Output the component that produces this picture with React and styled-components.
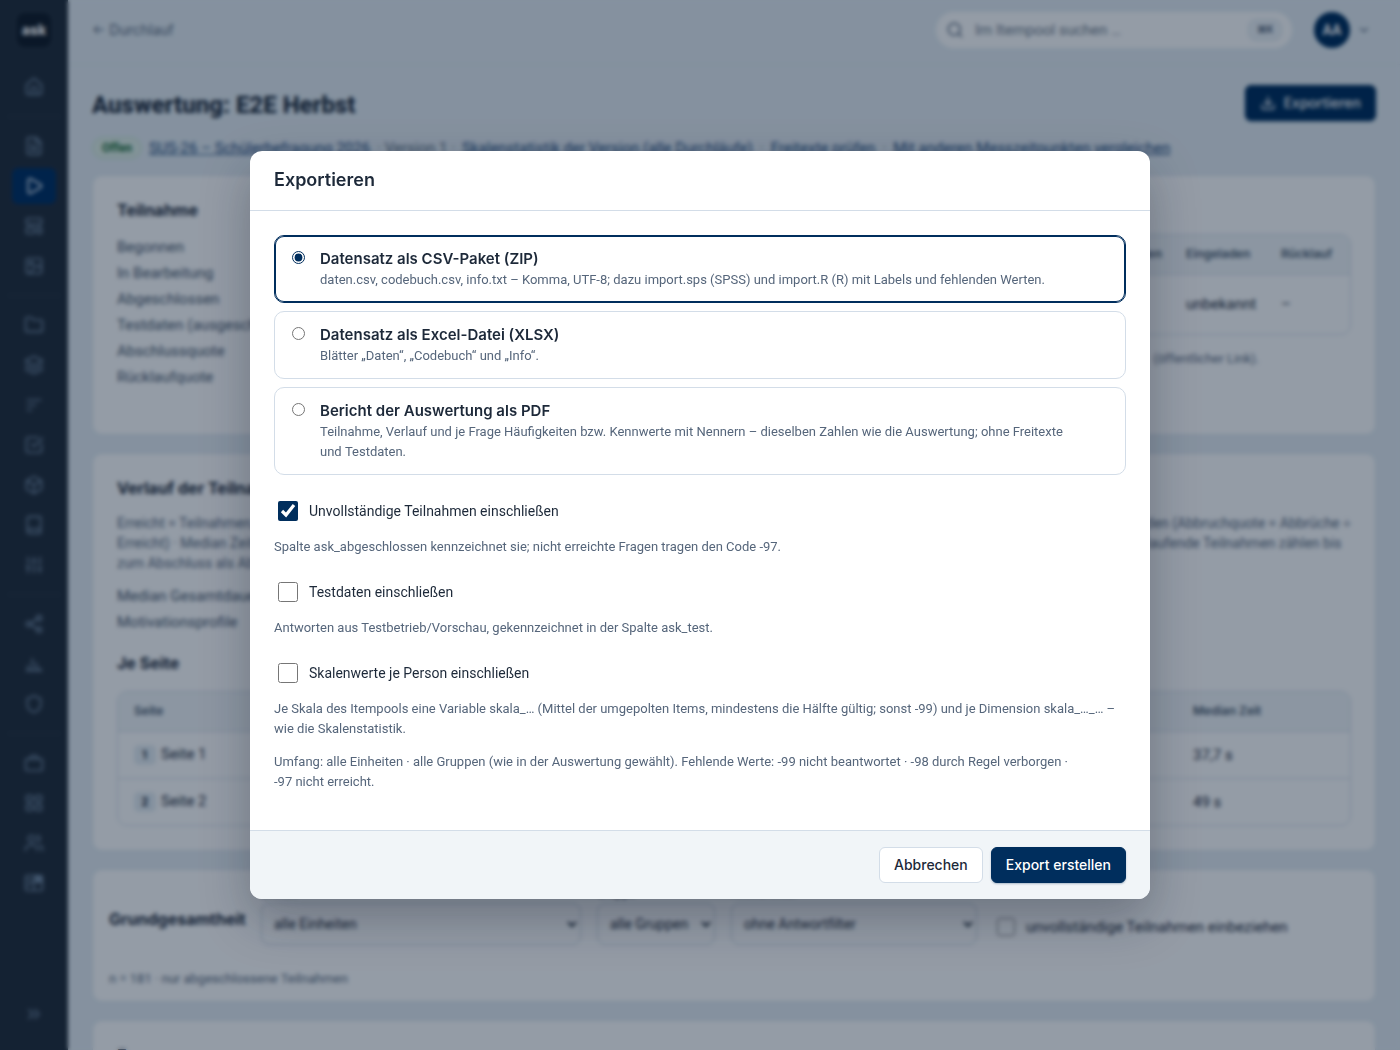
import React, { useState } from 'react';
import styled, { createGlobalStyle } from 'styled-components';
import {
  House,
  FileText,
  Play,
  LayoutTemplate,
  Image,
  Folder,
  Layers,
  SquareCheckBig,
  Box,
  Book,
  SlidersVertical,
  Share2,
  Shield,
  LayoutGrid,
  Users,
  ChevronsRight,
  ChevronDown,
  Search,
  Download,
} from 'lucide-react';

const GlobalStyle = createGlobalStyle`
  *, *::before, *::after {
    box-sizing: border-box;
  }

  body {
    margin: 0;
    background: #e5edf3;
    color: #1d2939;
    font-family: Roboto, "Liberation Sans", sans-serif;
    font-size: 15px;
    line-height: 20px;
  }

  button, input, select {
    font: inherit;
    color: inherit;
  }

  h1, h2, h3, p, dl, dd {
    margin: 0;
  }
`;

const Shell = styled.div`
  display: flex;
  height: 100vh;
  overflow: hidden;
`;

const Sidebar = styled.nav`
  display: flex;
  flex-direction: column;
  align-items: center;
  gap: 4px;
  width: 68px;
  flex-shrink: 0;
  padding: 13px 12px 18px;
  background: #242e3a;
`;

const Logo = styled.div`
  display: flex;
  align-items: center;
  justify-content: center;
  width: 34px;
  height: 34px;
  margin-bottom: 18px;
  border-radius: 8px;
  background: #121b26;
  color: #fff;
  font-family: Inter, sans-serif;
  font-size: 14px;
  font-weight: 800;
`;

const NavItem = styled.a`
  display: flex;
  align-items: center;
  justify-content: center;
  width: 44px;
  height: 36px;
  flex-shrink: 0;
  margin-top: ${(props) => (props.$last ? 'auto' : '0')};
  border-radius: 6px;
  background: ${(props) => (props.$active ? '#002f63' : 'transparent')};
  color: ${(props) => (props.$active ? '#e6eef6' : '#71869e')};
`;

const NavDivider = styled.hr`
  width: 52px;
  height: 1px;
  flex-shrink: 0;
  margin: 7px 0;
  border: none;
  background: #2d3947;
`;

const Content = styled.div`
  flex: 1;
  min-width: 0;
`;

const TopBar = styled.header`
  display: flex;
  align-items: center;
  justify-content: space-between;
  padding: 12px 29px 16px 24px;
  border-bottom: 1px solid #dde6ee;
`;

const BackLink = styled.a`
  color: #5b6b80;
  font-family: Inter, sans-serif;
  font-size: 14px;
  text-decoration: none;
`;

const TopActions = styled.div`
  display: flex;
  align-items: center;
  gap: 22px;
`;

const SearchBox = styled.label`
  display: flex;
  align-items: center;
  gap: 11px;
  width: 356px;
  height: 36px;
  padding: 0 10px;
  border-radius: 18px;
  background: #fff;
  color: #5b6b80;

  input {
    flex: 1;
    min-width: 0;
    padding: 0;
    border: none;
    outline: none;
    background: none;
  }

  input::placeholder {
    color: #6f7c8c;
  }
`;

const Shortcut = styled.kbd`
  padding: 0 8px;
  border: 1px solid #dde6ee;
  border-radius: 8px;
  background: #eef3f7;
  font-family: inherit;
  font-size: 10px;
  font-weight: 700;
`;

const UserMenu = styled.button`
  display: flex;
  align-items: center;
  gap: 7px;
  padding: 0;
  border: none;
  background: none;
  color: #5b6b80;
`;

const Avatar = styled.span`
  display: flex;
  align-items: center;
  justify-content: center;
  width: 36px;
  height: 36px;
  border-radius: 50%;
  background: #002e5d;
  color: #fff;
  font-size: 14px;
  font-weight: 700;
`;

const Main = styled.main`
  display: flex;
  flex-direction: column;
  padding: 20px 24px;
`;

const TitleRow = styled.div`
  display: flex;
  align-items: center;
  justify-content: space-between;
`;

const PageTitle = styled.h1`
  padding-top: 4px;
  font-size: 24px;
  font-weight: 800;
  line-height: 32px;
`;

const Button = styled.button`
  display: inline-flex;
  align-items: center;
  gap: 8px;
  height: 36px;
  padding: 0 14px;
  border: 1px solid ${(props) => (props.$primary ? '#002e5d' : '#d3dde8')};
  border-radius: 6px;
  background: ${(props) => (props.$primary ? '#002e5d' : '#fff')};
  box-shadow: ${(props) => (props.$primary ? '0 1px 2px rgba(0, 46, 93, 0.3)' : 'none')};
  color: ${(props) => (props.$primary ? '#fff' : '#1d2939')};
  font-family: Inter, sans-serif;
  font-size: 14px;
  font-weight: 500;
  cursor: pointer;
`;

const MetaRow = styled.div`
  display: flex;
  align-items: center;
  gap: 7px;
  margin: 16px 0;
  color: #5b6b80;
  white-space: nowrap;

  a {
    color: #1f4b7d;
  }
`;

const Badge = styled.span`
  padding: 0 9px;
  border: 1px solid #c5e0cf;
  border-radius: 11px;
  background: #e1f0e6;
  color: #176b34;
  font-size: 12px;
  font-weight: 700;
`;

const Cards = styled.div`
  display: flex;
  flex-direction: column;
  gap: 18px;
`;

const Card = styled.section`
  padding: ${(props) => (props.$compact ? '13px 16px 12px' : '22px 24px 24px')};
  border: 1px solid #dde6ee;
  border-radius: 10px;
  background: #fff;
`;

const CardTitle = styled.h2`
  font-family: Inter, sans-serif;
  font-size: 16px;
  font-weight: 700;
  line-height: 24px;
`;

const SubTitle = styled(CardTitle)`
  margin-top: 16px;
`;

const CardColumns = styled.div`
  display: grid;
  grid-template-columns: 1fr 2fr;
  gap: 24px;
  min-height: 212px;
`;

const Facts = styled.dl`
  margin-top: ${(props) => props.$top};
  color: #48586c;
  line-height: 26px;
`;

const Notes = styled.div`
  display: flex;
  justify-content: space-between;
  margin-top: 13px;
  color: #5b6b80;
  font-size: 14px;
`;

const TableNote = styled.p`
  margin-top: 14px;
  padding-right: 92px;
  color: #5b6b80;
  font-size: 13px;
  text-align: right;
`;

const TableFrame = styled.div`
  margin-top: ${(props) => props.$top};
  overflow: hidden;
  border: 1px solid #d3dde8;
  border-radius: 10px;
`;

const Table = styled.table`
  width: 100%;
  border-collapse: collapse;
  text-align: left;

  th {
    height: 39px;
    padding: 0 8px 0 16px;
    background: #f1f5f8;
    color: #48586c;
    font-family: Inter, sans-serif;
    font-size: 12px;
    font-weight: 600;
  }

  td {
    height: ${(props) => props.$rowHeight};
    padding: 0 8px 0 16px;
    border-top: 1px solid #d3dde8;
  }
`;

const Cell = styled.th`
  width: ${(props) => props.$width};
  text-align: ${(props) => props.$align || 'left'};
`;

const PageNumber = styled.span`
  display: inline-block;
  width: 22px;
  margin-right: 5px;
  border-radius: 5px;
  background: #e5edf3;
  font-size: 12px;
  font-weight: 700;
  text-align: center;
`;

const FilterRow = styled.div`
  display: flex;
  align-items: flex-end;
  gap: 16px;
`;

const FilterTitle = styled(CardTitle)`
  width: 136px;
  margin-bottom: 14px;
  white-space: nowrap;
`;

const Field = styled.label`
  display: flex;
  flex-direction: column;
  width: ${(props) => props.$width};
  font-size: 12px;
`;

const Select = styled.select`
  height: 42px;
  padding: 0 8px;
  border: 1px solid #c6d2de;
  border-radius: 8px;
  background: #fff;
  font-size: 14px;
`;

const InlineCheck = styled.label`
  display: flex;
  align-items: center;
  gap: 11px;
  margin: 0 0 8px 4px;

  input {
    width: 18px;
    height: 18px;
    margin: 0;
  }
`;

const FilterNote = styled.p`
  margin-top: 24px;
  color: #5b6b80;
  font-size: 13px;
`;

const Overlay = styled.div`
  position: fixed;
  inset: 0;
  display: flex;
  align-items: center;
  justify-content: center;
  padding: 24px;
  background: rgba(0, 20, 43, 0.42);
  backdrop-filter: blur(2px);
`;

const Dialog = styled.form`
  display: flex;
  flex-direction: column;
  width: 100%;
  max-width: 900px;
  max-height: 100%;
  overflow: hidden;
  border-radius: 12px;
  background: #fff;
  box-shadow: 0 20px 50px rgba(16, 24, 40, 0.3);
`;

const DialogHeader = styled.header`
  padding: 17px 24px 18px;
  border-bottom: 1px solid #d3dde8;
`;

const DialogTitle = styled.h2`
  font-family: Inter, sans-serif;
  font-size: 18px;
  font-weight: 600;
  line-height: 24px;
`;

const DialogBody = styled.div`
  display: flex;
  flex-direction: column;
  gap: 13px;
  padding: 24px 24px 38px;
  overflow: auto;
`;

const DialogFooter = styled.footer`
  display: flex;
  justify-content: flex-end;
  gap: 8px;
  padding: 16px 24px;
  border-top: 1px solid #d3dde8;
  background: #f1f5f8;
`;

const Options = styled.div`
  display: flex;
  flex-direction: column;
  gap: 8px;
  padding-bottom: 1px;
`;

const Option = styled.label`
  display: flex;
  align-items: flex-start;
  gap: 15px;
  padding: 12px 16px;
  border: 1px solid ${(props) => (props.$selected ? '#002e5d' : '#d3dde8')};
  border-radius: 10px;
  box-shadow: ${(props) => (props.$selected ? 'inset 0 0 0 1px #002e5d' : 'none')};
  cursor: pointer;

  input {
    width: 13px;
    height: 13px;
    flex-shrink: 0;
    margin: 3px 0 0 1px;
    accent-color: #002e5d;
  }
`;

const OptionTitle = styled.span`
  display: block;
  font-family: Inter, sans-serif;
  font-size: 15px;
  font-weight: 600;
  line-height: 22px;
`;

const Hint = styled.span`
  display: block;
  color: #56667b;
  font-size: 13px;
  line-height: 20px;
`;

const CheckGroup = styled.div`
  display: flex;
  flex-direction: column;
  gap: 4px;
`;

const CheckLabel = styled.label`
  display: flex;
  align-items: center;
  gap: 11px;
  height: 44px;
  padding-left: 4px;
  font-size: 14px;
  cursor: pointer;

  input {
    width: 20px;
    height: 20px;
    margin: 0;
    accent-color: #002e5d;
  }
`;

const Glyph = styled.svg`
  width: 20px;
  height: 20px;
  fill: none;
  stroke: currentColor;
  stroke-width: 2;
  stroke-linecap: round;
  stroke-linejoin: round;
`;

const LinesIcon = () => (
  <Glyph viewBox="0 0 24 24">
    <path d="M4 6h16M4 12h10M4 18h5" />
  </Glyph>
);

const BarsIcon = () => (
  <Glyph viewBox="0 0 24 24">
    <path d="M3 20h18M5 20v-6M10 20V6M15 20v-9M19 20v-3" />
  </Glyph>
);

const BagIcon = () => (
  <Glyph viewBox="0 0 24 24">
    <rect x="2" y="7" width="20" height="14" rx="2" />
    <path d="M8 7V5a2 2 0 0 1 2-2h4a2 2 0 0 1 2 2v2" />
  </Glyph>
);

const PanelIcon = () => (
  <Glyph viewBox="0 0 24 24">
    <rect x="2" y="3" width="20" height="18" rx="2" />
    <path d="M13 4h8v7h-8z" fill="currentColor" />
    <path d="M5 15l5-4M12 12v8M5 8h5" />
  </Glyph>
);

const navGroups = [
  [House],
  [FileText, Play, LayoutTemplate, Image],
  [Folder, Layers, LinesIcon, SquareCheckBig, Box, Book, SlidersVertical],
  [Share2, BarsIcon, Shield],
  [BagIcon, LayoutGrid, Users, PanelIcon],
];

const formats = [
  {
    id: 'csv',
    title: 'Datensatz als CSV-Paket (ZIP)',
    text: 'daten.csv, codebuch.csv, info.txt – Komma, UTF-8; dazu import.sps (SPSS) und import.R (R) mit Labels und fehlenden Werten.',
  },
  {
    id: 'xlsx',
    title: 'Datensatz als Excel-Datei (XLSX)',
    text: 'Blätter „Daten“, „Codebuch“ und „Info“.',
  },
  {
    id: 'pdf',
    title: 'Bericht der Auswertung als PDF',
    text: 'Teilnahme, Verlauf und je Frage Häufigkeiten bzw. Kennwerte mit Nennern – dieselben Zahlen wie die Auswertung; ohne Freitexte und\u00a0Testdaten.',
  },
];

const extras = [
  {
    id: 'incomplete',
    label: 'Unvollständige Teilnahmen einschließen',
    text: 'Spalte ask_abgeschlossen kennzeichnet sie; nicht erreichte Fragen tragen den Code -97.',
  },
  {
    id: 'test',
    label: 'Testdaten einschließen',
    text: 'Antworten aus Testbetrieb/Vorschau, gekennzeichnet in der Spalte ask_test.',
  },
  {
    id: 'scales',
    label: 'Skalenwerte je Person einschließen',
    text: 'Je Skala des Itempools eine Variable skala_… (Mittel der umgepolten Items, mindestens die Hälfte gültig; sonst -99) und je Dimension skala_…_… – wie die Skalenstatistik.',
  },
];

function AppSidebar() {
  return (
    <Sidebar>
      <Logo>ask</Logo>
      {navGroups.map((group, index) => (
        <React.Fragment key={index}>
          {index > 0 && <NavDivider />}
          {group.map((Icon, i) => (
            <NavItem key={i} href="#" $active={Icon === Play}>
              <Icon size={20} />
            </NavItem>
          ))}
        </React.Fragment>
      ))}
      <NavItem href="#" $last>
        <ChevronsRight size={20} />
      </NavItem>
    </Sidebar>
  );
}

function ParticipationCard() {
  return (
    <Card>
      <CardColumns>
        <div>
          <CardTitle>Teilnahme</CardTitle>
          <Facts $top="12px">
            <dt>Begonnen</dt>
            <dt>In Bearbeitung</dt>
            <dt>Abgeschlossen</dt>
            <dt>Testdaten (ausgeschlossen)</dt>
            <dt>Abschlussquote</dt>
            <dt>Rücklaufquote</dt>
          </Facts>
        </div>
        <div>
          <TableFrame $top="36px">
            <Table $rowHeight="60px">
              <thead>
                <tr>
                  <Cell $align="right">Teilnehmenden</Cell>
                  <Cell $width="95px">Eingeladen</Cell>
                  <Cell $width="85px">Rücklauf</Cell>
                </tr>
              </thead>
              <tbody>
                <tr>
                  <td />
                  <td>unbekannt</td>
                  <td>–</td>
                </tr>
              </tbody>
            </Table>
          </TableFrame>
          <TableNote>(öffentlicher Link).</TableNote>
        </div>
      </CardColumns>
    </Card>
  );
}

function ProgressCard() {
  return (
    <Card>
      <CardTitle>Verlauf der Teilnahme</CardTitle>
      <Notes>
        <span>
          Erreicht = Teilnahmen,
          <br />
          Erreicht) · Median Zeit
          <br />
          zum Abschluss als Abbruch.
        </span>
        <span>
          den (Abbruchquote = Abbrüche ÷
          <br />
          laufende Teilnahmen zählen bis
        </span>
      </Notes>
      <Facts $top="10px">
        <dt>Median Gesamtdauer</dt>
        <dt>Motivationsprofile</dt>
      </Facts>
      <SubTitle as="h3">Je Seite</SubTitle>
      <TableFrame $top="16px">
        <Table $rowHeight="47px">
          <thead>
            <tr>
              <Cell>Seite</Cell>
              <Cell $width="173px">Median Zeit</Cell>
            </tr>
          </thead>
          <tbody>
            <tr>
              <td>
                <PageNumber>1</PageNumber>
                Seite 1
              </td>
              <td>37,7 s</td>
            </tr>
            <tr>
              <td>
                <PageNumber>2</PageNumber>
                Seite 2
              </td>
              <td>49 s</td>
            </tr>
          </tbody>
        </Table>
      </TableFrame>
    </Card>
  );
}

function PopulationCard() {
  return (
    <Card $compact>
      <FilterRow>
        <FilterTitle>Grundgesamtheit</FilterTitle>
        <Field $width="320px">
          Einheit
          <Select>
            <option>alle Einheiten</option>
          </Select>
        </Field>
        <Field $width="118px">
          Gruppe
          <Select>
            <option>alle Gruppen</option>
          </Select>
        </Field>
        <Field $width="246px">
          Antwortfilter
          <Select>
            <option>ohne Antwortfilter</option>
          </Select>
        </Field>
        <InlineCheck>
          <input type="checkbox" />
          unvollständige Teilnahmen einbeziehen
        </InlineCheck>
      </FilterRow>
      <FilterNote>n = 181 · nur abgeschlossene Teilnahmen</FilterNote>
    </Card>
  );
}

function ExportDialog() {
  const [format, setFormat] = useState('csv');
  const [checked, setChecked] = useState({ incomplete: true });

  const toggle = (id) => {
    setChecked({ ...checked, [id]: !checked[id] });
  };

  return (
    <Overlay>
      <Dialog
        role="dialog"
        aria-labelledby="export-title"
        onSubmit={(e) => e.preventDefault()}
      >
        <DialogHeader>
          <DialogTitle id="export-title">Exportieren</DialogTitle>
        </DialogHeader>
        <DialogBody>
          <Options>
            {formats.map((item) => (
              <Option key={item.id} $selected={format === item.id}>
                <input
                  type="radio"
                  name="format"
                  checked={format === item.id}
                  onChange={() => setFormat(item.id)}
                />
                <span>
                  <OptionTitle>{item.title}</OptionTitle>
                  <Hint>{item.text}</Hint>
                </span>
              </Option>
            ))}
          </Options>
          {extras.map((item) => (
            <CheckGroup key={item.id}>
              <CheckLabel>
                <input
                  type="checkbox"
                  checked={Boolean(checked[item.id])}
                  onChange={() => toggle(item.id)}
                />
                {item.label}
              </CheckLabel>
              <Hint>{item.text}</Hint>
            </CheckGroup>
          ))}
          <Hint as="p">
            Umfang: alle Einheiten · alle Gruppen (wie in der Auswertung
            gewählt). Fehlende Werte: -99 nicht beantwortet · -98 durch Regel
            verborgen · -97&nbsp;nicht&nbsp;erreicht.
          </Hint>
        </DialogBody>
        <DialogFooter>
          <Button type="button">Abbrechen</Button>
          <Button type="submit" $primary>
            Export erstellen
          </Button>
        </DialogFooter>
      </Dialog>
    </Overlay>
  );
}

function App() {
  return (
    <>
      <GlobalStyle />
      <Shell>
        <AppSidebar />
        <Content>
          <TopBar>
            <BackLink href="#">← Durchlauf</BackLink>
            <TopActions>
              <SearchBox>
                <Search size={18} />
                <input type="search" placeholder="Im Itempool suchen …" />
                <Shortcut>⌘K</Shortcut>
              </SearchBox>
              <UserMenu type="button">
                <Avatar>AA</Avatar>
                <ChevronDown size={14} />
              </UserMenu>
            </TopActions>
          </TopBar>
          <Main>
            <TitleRow>
              <PageTitle>Auswertung: E2E Herbst</PageTitle>
              <Button type="button" $primary>
                <Download size={16} />
                Exportieren
              </Button>
            </TitleRow>
            <MetaRow>
              <Badge>Offen</Badge>
              <a href="#">SUS-26 – Schülerbefragung 2026</a>
              <span>· Version 1 ·</span>
              <a href="#">Skalenstatistik der Version (alle Durchläufe)</a>
              <span>·</span>
              <a href="#">Freitexte prüfen</a>
              <span>·</span>
              <a href="#">Mit anderen Messzeitpunkten vergleichen</a>
            </MetaRow>
            <Cards>
              <ParticipationCard />
              <ProgressCard />
              <PopulationCard />
              <Card>
                <CardTitle>Exporte</CardTitle>
              </Card>
            </Cards>
          </Main>
        </Content>
      </Shell>
      <ExportDialog />
    </>
  );
}

export default App;
